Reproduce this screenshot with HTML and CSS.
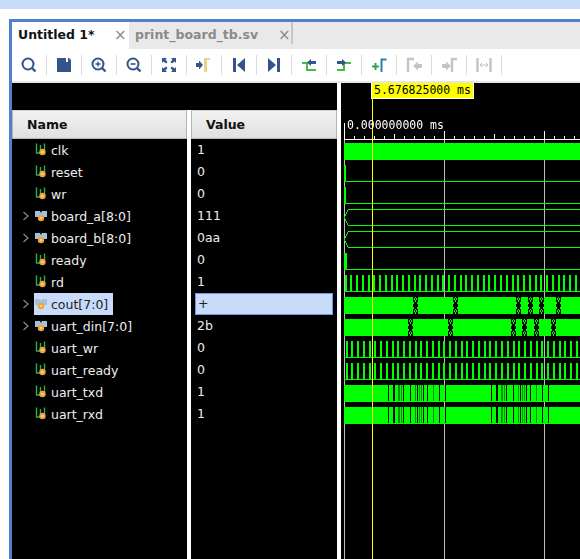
FILE: index.html
```html
<!DOCTYPE html>
<html lang="en">
<head>
  <meta charset="UTF-8" />
  <title>Untitled 1*</title>
  <link rel="stylesheet" href="styles.css">
</head>
<body>
  <svg class="defs" width="0" height="0">
    <symbol id="sig" viewBox="0 0 14 16">
      <path d="M2.500 1.500V11h4V3M10.500 1.500V8" fill="none" stroke="#2fae4e" stroke-width="1.400"/>
      <circle cx="8.500" cy="10" r="3.200" fill="#f2a33a"/>
      <circle cx="8.500" cy="10" r="1.100" fill="#ffe0a8"/>
    </symbol>
    <symbol id="bus" viewBox="0 0 14 16">
      <path d="M1 3h5l1 2 1-2h5v6H9l-2 1-2-1H1z" fill="#9fc3de"/>
      <circle cx="7" cy="10" r="3.200" fill="#f2a33a"/>
      <circle cx="7" cy="10" r="1.100" fill="#ffe0a8"/>
    </symbol>
    <symbol id="lens" viewBox="0 0 20 20">
      <circle cx="9" cy="9" r="5.500" fill="none" stroke="#34558b" stroke-width="2"/>
      <path d="M13 13l3.500 3.500" stroke="#34558b" stroke-width="2.400"/>
    </symbol>
  </svg>

  <div class="topband"></div>

  <div class="panel">
    <div class="tabs">
      <div class="tab active"><span>Untitled 1*</span><b class="close">×</b></div>
      <div class="tab"><span>print_board_tb.sv</span><b class="close">×</b></div>
    </div>

    <div class="toolbar">
      <div class="tool"><svg class="ico"><use href="#lens"/></svg></div>
      <div class="tool">
        <svg class="ico" viewBox="0 0 20 20"><path d="M3 3h9v4h2V3h1l2 2v12H3z" fill="#34558b"/></svg>
      </div>
      <div class="tool">
        <svg class="ico" viewBox="0 0 20 20"><use href="#lens"/><path d="M6.500 9h5M9 6.500v5" stroke="#34558b" stroke-width="1.400"/></svg>
      </div>
      <div class="tool">
        <svg class="ico" viewBox="0 0 20 20"><use href="#lens"/><path d="M6.500 9h5" stroke="#34558b" stroke-width="1.600"/></svg>
      </div>
      <div class="tool">
        <svg class="ico" viewBox="0 0 20 20"><path d="M3 3h5L6.500 4.500 8.500 7 7 8.500 4.500 6.500 3 8zM17 3v5l-1.500-1.500L13 8.500 11.500 7l2-2.500L12 3zM3 17v-5l1.500 1.500L7 11.500 8.500 13l-2 2.500L8 17zM17 17h-5l1.500-1.500-2-2.500 1.500-1.500 2.500 2 1.500-1.500z" fill="#34558b"/></svg>
      </div>
      <div class="tool">
        <svg class="ico" viewBox="0 0 20 20"><path d="M10 3h6v2h-3v12h-3z" fill="#e8d58a"/><path d="M2 8h3V5.500L9 10l-4 4.500V12H2z" fill="#34558b"/></svg>
      </div>
      <div class="tool">
        <svg class="ico" viewBox="0 0 20 20"><path d="M4 3h3v14H4zM16 3v14L8 10z" fill="#34558b"/></svg>
      </div>
      <div class="tool">
        <svg class="ico" viewBox="0 0 20 20"><path d="M13 3h3v14h-3zM4 3v14l8-7z" fill="#34558b"/></svg>
      </div>
      <div class="tool">
        <svg class="ico" viewBox="0 0 20 20"><path d="M3 8h5v7h9" fill="none" stroke="#44bb44" stroke-width="2"/><path d="M17 6h-5V4L8 7.500l4 3.500V9h5z" fill="#34558b"/></svg>
      </div>
      <div class="tool">
        <svg class="ico" viewBox="0 0 20 20"><path d="M3 15h7V8h7" fill="none" stroke="#44bb44" stroke-width="2"/><path d="M3 6h5V4l4 3.500L8 11V9H3z" fill="#34558b"/></svg>
      </div>
      <div class="tool">
        <svg class="ico" viewBox="0 0 20 20"><path d="M3 11.500h7M6.500 8v7" stroke="#3c9e50" stroke-width="2"/><path d="M12.500 17V4.500h5" fill="none" stroke="#2d7fb0" stroke-width="2"/></svg>
      </div>
      <div class="tool">
        <svg class="ico" viewBox="0 0 20 20"><path d="M4 17V4h6" fill="none" stroke="#c4c4c4" stroke-width="2.400"/><path d="M18 9h-4V6.500L9 11l5 4.500V13h4z" fill="#c4c4c4"/></svg>
      </div>
      <div class="tool">
        <svg class="ico" viewBox="0 0 20 20"><path d="M13 17V4h5" fill="none" stroke="#c4c4c4" stroke-width="2.400"/><path d="M3 9h4V6.500l5 4.500-5 4.500V13H3z" fill="#c4c4c4"/></svg>
      </div>
      <div class="tool">
        <svg class="ico" viewBox="0 0 20 20"><path d="M3.500 3v14M16.500 3v14" fill="none" stroke="#c4c4c4" stroke-width="2.400"/><path d="M6 10h8M6 10l2-2M6 10l2 2M14 10l-2-2M14 10l-2 2" fill="none" stroke="#c4c4c4"/></svg>
      </div>
    </div>
    <div class="rule"></div>

    <div class="viewer">
      <div class="names-values">
        <div class="blackstrip"></div>
        <div class="columns">
          <div class="col col-name">
            <div class="head">Name</div>
            <div class="row"><svg class="sigico"><use href="#sig"/></svg><span>clk</span></div>
            <div class="row"><svg class="sigico"><use href="#sig"/></svg><span>reset</span></div>
            <div class="row"><svg class="sigico"><use href="#sig"/></svg><span>wr</span></div>
            <div class="row"><svg class="twisty" viewBox="0 0 8 10"><path d="M1.500 1l4.500 4-4.500 4" fill="none" stroke="#8a8a8a" stroke-width="1.200"/></svg><svg class="sigico"><use href="#bus"/></svg><span>board_a[8:0]</span></div>
            <div class="row"><svg class="twisty" viewBox="0 0 8 10"><path d="M1.500 1l4.500 4-4.500 4" fill="none" stroke="#8a8a8a" stroke-width="1.200"/></svg><svg class="sigico"><use href="#bus"/></svg><span>board_b[8:0]</span></div>
            <div class="row"><svg class="sigico"><use href="#sig"/></svg><span>ready</span></div>
            <div class="row"><svg class="sigico"><use href="#sig"/></svg><span>rd</span></div>
            <div class="row selected"><svg class="twisty" viewBox="0 0 8 10"><path d="M1.500 1l4.500 4-4.500 4" fill="none" stroke="#8a8a8a" stroke-width="1.200"/></svg><div class="selname"><svg class="sigico"><use href="#bus"/></svg><span>cout[7:0]</span></div></div>
            <div class="row"><svg class="twisty" viewBox="0 0 8 10"><path d="M1.500 1l4.500 4-4.500 4" fill="none" stroke="#8a8a8a" stroke-width="1.200"/></svg><svg class="sigico"><use href="#bus"/></svg><span>uart_din[7:0]</span></div>
            <div class="row"><svg class="sigico"><use href="#sig"/></svg><span>uart_wr</span></div>
            <div class="row"><svg class="sigico"><use href="#sig"/></svg><span>uart_ready</span></div>
            <div class="row"><svg class="sigico"><use href="#sig"/></svg><span>uart_txd</span></div>
            <div class="row"><svg class="sigico"><use href="#sig"/></svg><span>uart_rxd</span></div>
          </div>
          <div class="col col-value">
            <div class="head">Value</div>
            <div class="val">1</div>
            <div class="val">0</div>
            <div class="val">0</div>
            <div class="val">111</div>
            <div class="val">0aa</div>
            <div class="val">0</div>
            <div class="val">1</div>
            <div class="val val-selected">+</div>
            <div class="val">2b</div>
            <div class="val">0</div>
            <div class="val">0</div>
            <div class="val">1</div>
            <div class="val">1</div>
          </div>
        </div>
      </div>

      <div class="wavepane">
        <canvas id="waves" width="239" height="476"></canvas>
        <div class="cursor-label">5.676825000 ms</div>
        <div class="ruler-label">0.000000000 ms</div>
      </div>
    </div>
  </div>

  <script src="wave.js"></script>
</body>
</html>
```

FILE: styles.css
```css
html, body {
  margin: 0;
  height: 100%;
  overflow: hidden;
  background-color: #fff;
  font-family: "DejaVu Sans", sans-serif;
}

.defs {
  position: absolute;
}

.topband {
  height: 9px;
  background-color: #c8dbfb;
}

.panel {
  margin-top: 10px;
  margin-left: 9px;
  height: 540px;
  box-sizing: border-box;
  border-top: 3px solid #4f81cf;
  border-left: 3px solid #4f81cf;
  display: flex;
  flex-direction: column;
}

/* Tabs */
.tabs {
  height: 27px;
  flex: none;
  display: flex;
  background-color: #e9e9e9;
}

.tab {
  width: 164px;
  height: 22px;
  box-sizing: border-box;
  padding-left: 6px;
  display: flex;
  align-items: center;
  justify-content: space-between;
  font-size: 12.5px;
  font-weight: bold;
  color: #8a8a8a;
  border-right: 2px solid #c6c6c6;
}

.tab span {
  position: relative;
  top: 1px;
}

.tab.active {
  width: 117px;
  height: 27px;
  color: #111;
  background-color: #fff;
  border-right: none;
  padding-bottom: 5px;
}

.close {
  width: 13px;
  font-size: 15px;
  font-weight: normal;
  color: #8a8a8a;
  text-align: left;
  position: relative;
  top: 2px;
}

.active .close {
  width: 15px;
}

/* Toolbar */
.toolbar {
  height: 32px;
  flex: none;
  display: flex;
  align-items: center;
  background-color: #fff;
}

.tool {
  width: 35px;
  height: 20px;
  box-sizing: border-box;
  border-right: 1px solid #dcdcdc;
  display: flex;
  align-items: center;
  justify-content: center;
}

.ico {
  width: 20px;
  height: 20px;
}

.rule {
  height: 2px;
  flex: none;
  background-color: #e6e6e6;
}

/* Viewer */
.viewer {
  flex: 1;
  display: flex;
  min-height: 0;
}

.names-values {
  width: 325px;
  flex: none;
  display: flex;
  flex-direction: column;
}

.blackstrip {
  height: 27px;
  flex: none;
  background-color: #000;
}

.columns {
  flex: 1;
  display: flex;
  gap: 4px;
}

.col {
  background-color: #000;
}

.col-name {
  width: 175px;
}

.col-value {
  width: 146px;
}

.head {
  height: 29px;
  box-sizing: border-box;
  border: 1px solid #b4b4b4;
  border-top-color: #d0d0d0;
  background: linear-gradient(#f2f2f2, #e0e0e0);
  font-size: 12.5px;
  font-weight: bold;
  line-height: 27px;
  color: #111;
  padding-left: 14px;
}

.row {
  height: 22px;
  padding-left: 22px;
  display: flex;
  align-items: center;
  font-size: 12.5px;
  color: #eee;
  position: relative;
}

.row span {
  margin-left: 3px;
}

.sigico {
  width: 14px;
  height: 16px;
  flex: none;
}

.twisty {
  position: absolute;
  left: 10px;
  top: 6px;
  width: 8px;
  height: 10px;
}

.selname {
  display: flex;
  align-items: center;
  height: 22px;
  width: 79px;
  background-color: #c8dbfb;
  color: #222;
}

.val {
  height: 22px;
  line-height: 22px;
  padding-left: 6px;
  font-size: 12.5px;
  color: #eee;
}

.val-selected {
  box-sizing: border-box;
  margin-left: 4px;
  width: 138px;
  padding-left: 2px;
  line-height: 20px;
  border: 1px solid #6a9ad8;
  background-color: #c8dbfb;
  color: #222;
}

/* Waveform */
.wavepane {
  margin-left: 4px;
  flex: 1;
  background-color: #000;
  position: relative;
  overflow: hidden;
}

#waves {
  display: block;
}

.cursor-label {
  position: absolute;
  left: 30px;
  top: 0;
  width: 103px;
  height: 16px;
  box-sizing: border-box;
  padding-left: 2px;
  border: 1px solid #fff;
  border-top: none;
  background-color: #ff0;
  color: #000;
  font-family: "DejaVu Sans Mono", monospace;
  font-size: 11.5px;
  line-height: 14px;
}

.ruler-label {
  position: absolute;
  left: 6px;
  top: 35px;
  color: #fff;
  font-family: "DejaVu Sans Mono", monospace;
  font-size: 11.5px;
  line-height: 14px;
}
```

FILE: wave.js
```js
// waveform drawing, coordinates are page pixels
const canvas = document.getElementById('waves');
const ctx = canvas.getContext('2d');
ctx.translate(-341, -83);

const GREEN = '#00ff00';
const DARK = '#0a8f0a';

function box(color, x, y, w, h) {
  ctx.fillStyle = color;
  ctx.fillRect(x, y, w, h);
}

function rowTop(i) {
  return 143 + 22 * i;
}

// grid lines
[344, 444, 544].forEach(x => box('#bdbdbd', x, 139, 1, 420));

// ruler
box('#fff', 344, 123, 1, 16);
box('#fff', 344, 139, 236, 1);
for (let x = 354; x < 580; x += 10) {
  const h = (x - 344) % 100 === 0 ? 8 : (x - 344) % 50 === 0 ? 5 : 3;
  box('#fff', x, 139 - h, 1, h);
}

function solid(i) {
  box(GREEN, 344, rowTop(i), 236, 17);
}

function low(i, pulse) {
  box(GREEN, 344, rowTop(i) + 16, 236, 1);
  box(GREEN, 344, rowTop(i), pulse, 17);
}

function bus(i) {
  const t = rowTop(i);
  box(GREEN, 348, t, 232, 1);
  box(GREEN, 348, t + 16, 232, 1);
  for (let s = 0; s < 4; s++) {
    box(GREEN, 344 + s, t + 7 - 2 * s, 1, 2);
    box(GREEN, 344 + s, t + 8 + 2 * s, 1, 2);
  }
}

function pulses(i, start) {
  const t = rowTop(i);
  box(GREEN, 344, t + 16, 236, 1);
  for (let x = start; x < 580; x += 5.76) {
    box(GREEN, Math.round(x), t, 2, 17);
  }
}

const CROSS = [
  '##.##', '#.#.#', '#.#.#', '##.##', '##.##', '.###.', '.###.', '#####', '#####',
  '#####', '.###.', '.###.', '##.##', '#.#.#', '#.#.#', '##.##', '##.##'
];

function crossings(i, xs) {
  solid(i);
  xs.forEach(x => {
    CROSS.forEach((line, r) => {
      for (let c = 0; c < 5; c++) {
        if (line[c] === '#') box('#000', x + c, rowTop(i) + r, 1, 1);
      }
    });
  });
}

const GAPS = [[388, 1], [393, 2], [403, 1], [410, 1], [417, 1], [423, 1], [427, 1], [439, 1], [445, 1]];
const SHADES = [[398, 2], [401, 1], [415, 1], [419, 1], [421, 1], [433, 1]];

function serial(i) {
  solid(i);
  const t = rowTop(i);
  [0, 103].forEach(off => {
    SHADES.forEach(g => box(DARK, g[0] + off, t, g[1], 16));
    GAPS.forEach(g => box('#000', g[0] + off, t, g[1], 16));
  });
}

solid(0);
low(1, 2);
low(2, 2);
bus(3);
bus(4);
low(5, 3);
pulses(6, 344.5);
crossings(7, [413, 453, 516, 528, 539, 556]);
crossings(8, [408, 448, 511, 522, 534, 551]);
pulses(9, 345.5);
pulses(10, 345.5);
serial(11);
serial(12);

// cursor
box('#ffff00', 372, 99, 1, 460);
```
